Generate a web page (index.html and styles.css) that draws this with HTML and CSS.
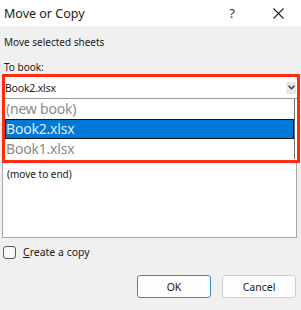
FILE: index.html
```html
<!DOCTYPE html>
<html>
<head>
<meta charset="utf-8">
<link rel="stylesheet" href="styles.css">
</head>
<body>
<div class="dialog">
  <div class="titlebar">
    <span class="title">Move or Copy</span>
    <span class="help">?</span>
    <svg class="close" width="11" height="11" viewBox="0 0 11 11"><path d="M0.5 0.5 L10.5 10.5 M10.5 0.5 L0.5 10.5" stroke="#222" stroke-width="1.1" fill="none"/></svg>
  </div>
  <div class="body">
    <div class="label first">Move selected sheets</div>
    <div class="label">To book:</div>
    <div class="highlight">
      <div class="combo">
        <span class="combo-text">Book2.xlsx</span>
        <span class="combo-btn"><svg width="7" height="5" viewBox="0 0 7 5"><path d="M0.5 0.8 L3.5 3.8 L6.5 0.8" stroke="#333" stroke-width="1.3" fill="none"/></svg></span>
      </div>
      <div class="droplist">
        <div class="item">(new book)</div>
        <div class="item selected">Book2.xlsx</div>
        <div class="item">Book1.xlsx</div>
      </div>
    </div>
    <div class="listbox">
      <div class="lb-item">(move to end)</div>
    </div>
    <label class="check">
      <span class="box"></span>
      <span class="check-text"><u>C</u>reate a copy</span>
    </label>
    <div class="buttons">
      <button class="btn default">OK</button>
      <button class="btn">Cancel</button>
    </div>
  </div>
</div>
</body>
</html>
```

FILE: styles.css
```css
* { box-sizing: border-box; }
html, body { margin: 0; padding: 0; }
body {
  width: 301px;
  height: 310px;
  overflow: hidden;
  background: #f0f0f0;
  font-family: "Noto Sans", "Open Sans", sans-serif;
  color: #1a1a1a;
}
.dialog { width: 301px; height: 310px; }
.titlebar {
  height: 26px;
  background: #ffffff;
  display: flex;
  align-items: center;
  padding-left: 4px;
}
.title { font-size: 12.5px; flex: 1; color: #1a1a1a; }
.help { font-size: 13px; color: #333; margin-right: 38px; }
.close { margin-right: 17px; }
.label {
  font-size: 10px;
  padding-left: 4px;
  line-height: 14px;
}
.label.first { margin-top: 9px; margin-bottom: 11px; }
.highlight {
  margin: 0 1px 0 2px;
  border: 3px solid #ff2a10;
  background: #fff;
  height: 89px;
}
.combo {
  height: 22px;
  display: flex;
  align-items: center;
  border-bottom: 1px solid #9a9a9a;
  background: #fff;
}
.combo-text { font-size: 10.5px; flex: 1; padding-left: 0; letter-spacing: -0.2px; }
.combo-btn {
  width: 10px;
  height: 12px;
  display: flex;
  align-items: center;
  justify-content: center;
  background: #e8e8e8;
  margin-right: 1px;
}
.droplist {
  margin-right: 2px;
  border-right: 1px solid #6b6b6b;
}
.item {
  height: 20px;
  line-height: 20px;
  font-size: 14px;
  color: #8a8a8a;
  padding-left: 1px;
  letter-spacing: -0.2px;
}
.item.selected {
  background: #0078d7;
  color: #dfeefb;
  border: 1.5px solid #111;
  line-height: 17px;
  padding-left: 0;
}
.listbox {
  margin: 0 4px 0 2px;
  height: 75px;
  background: #fff;
  border: 1px solid #a8a8a8;
  border-top: none;
  padding-top: 4px;
}
.lb-item { font-size: 10px; padding-left: 4px; line-height: 14px; }
.check {
  display: flex;
  align-items: center;
  margin: 7px 0 0 3px;
  font-size: 10.5px;
}
.box {
  width: 13px;
  height: 13px;
  border: 1px solid #5a5a5a;
  border-radius: 3px;
  background: #f6f6f6;
  margin-right: 7px;
}
.buttons {
  display: flex;
  justify-content: flex-end;
  gap: 11px;
  margin-top: 16px;
  padding-right: 5px;
}
.btn {
  width: 74px;
  height: 23px;
  font-family: inherit;
  font-size: 10.5px;
  background: #fdfdfd;
  border: 1px solid #d0d0d0;
  border-radius: 3px;
  color: #1a1a1a;
  padding: 0;
}
.btn.default { border-color: #3b86c9; }
```
